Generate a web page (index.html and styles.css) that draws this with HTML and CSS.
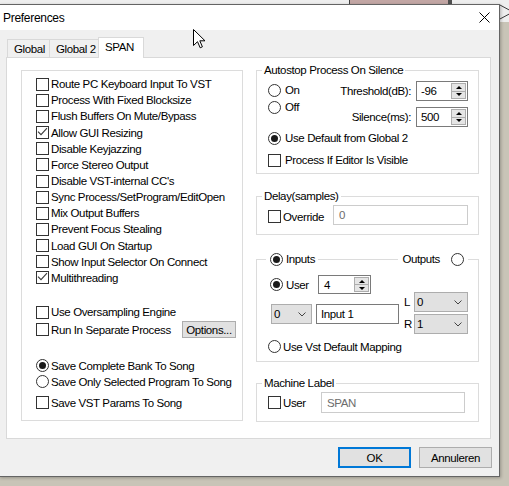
FILE: index.html
```html
<!DOCTYPE html>
<html lang="nl">
<head>
<meta charset="utf-8">
<title>Preferences</title>
<link rel="stylesheet" href="styles.css">
</head>
<body>
<div class="desktop">
  <div class="behind"><div class="pink"></div></div>
  <svg class="behind-tri" width="12" height="24" viewBox="0 0 12 24"><polyline points="0,4.5 14,12 0,19.5" fill="none" stroke="#3a3a3a" stroke-width="1"/></svg>
  <div class="window">
    <div class="titlebar">
      <span class="title">Preferences</span>
      <svg class="close" width="11" height="11" viewBox="0 0 11 11"><path d="M0.5 0.5 L10.5 10.5 M10.5 0.5 L0.5 10.5" stroke="#000" stroke-width="1" fill="none"/></svg>
    </div>
    <div class="wbody">
      <div class="tabs">
        <div class="tab t1">Global</div>
        <div class="tab t2">Global 2</div>
        <div class="tab t3 active">SPAN</div>
      </div>
      <div class="page">
        <div class="lgroup">
          <div class="row"><span class="cb"></span>Route PC Keyboard Input To VST</div>
          <div class="row"><span class="cb"></span>Process With Fixed Blocksize</div>
          <div class="row"><span class="cb"></span>Flush Buffers On Mute/Bypass</div>
          <div class="row"><span class="cb"><svg width="11" height="11" viewBox="0 0 11 11"><polyline points="1,4.6 4,7.6 10,1.2" fill="none" stroke="#3a3a3a" stroke-width="1.1"/></svg></span>Allow GUI Resizing</div>
          <div class="row"><span class="cb"></span>Disable Keyjazzing</div>
          <div class="row"><span class="cb"></span>Force Stereo Output</div>
          <div class="row"><span class="cb"></span>Disable VST-internal CC's</div>
          <div class="row"><span class="cb"></span>Sync Process/SetProgram/EditOpen</div>
          <div class="row"><span class="cb"></span>Mix Output Buffers</div>
          <div class="row"><span class="cb"></span>Prevent Focus Stealing</div>
          <div class="row"><span class="cb"></span>Load GUI On Startup</div>
          <div class="row"><span class="cb"></span>Show Input Selector On Connect</div>
          <div class="row"><span class="cb"><svg width="11" height="11" viewBox="0 0 11 11"><polyline points="1,4.6 4,7.6 10,1.2" fill="none" stroke="#3a3a3a" stroke-width="1.1"/></svg></span>Multithreading</div>
          <div class="row mt-over"><span class="cb"></span>Use Oversampling Engine</div>
          <div class="row run"><span class="cb"></span>Run In Separate Process<div class="opt">Options...</div></div>
          <div class="row mt-save"><span class="rd on"></span>Save Complete Bank To Song</div>
          <div class="row"><span class="rd"></span>Save Only Selected Program To Song</div>
          <div class="row mt-vst"><span class="cb"></span>Save VST Params To Song</div>
        </div>
        <div class="rcol">
          <fieldset class="fs autostop">
            <legend>Autostop Process On Silence</legend>
            <div class="fin">
              <div class="as-top">
                <div class="as-radios">
                  <div class="r17"><span class="rd r4"></span>On</div>
                  <div class="r17"><span class="rd r4"></span>Off</div>
                </div>
                <div class="as-fields">
                  <div class="frow"><span>Threshold(dB):</span><div class="spin"><span class="v">-96</span><span class="sb"><i class="up"></i><i class="dn"></i></span></div></div>
                  <div class="frow f2"><span>Silence(ms):</span><div class="spin"><span class="v">500</span><span class="sb"><i class="up"></i><i class="dn"></i></span></div></div>
                </div>
              </div>
              <div class="row16 mt3"><span class="rd on r4"></span>Use Default from Global 2</div>
              <div class="row16 mt6"><span class="cb r4"></span>Process If Editor Is Visible</div>
            </div>
          </fieldset>
          <fieldset class="fs delay">
            <legend>Delay(samples)</legend>
            <div class="fin drow">
              <div class="row16 ovr"><span class="cb"></span>Override</div>
              <div class="tx dis w135">0</div>
            </div>
          </fieldset>
          <fieldset class="fs inputs">
            <legend class="iolg"><span class="rd on r3"></span><span>Inputs</span><span class="line"></span><span>Outputs</span><span class="rd oright"></span></legend>
            <div class="fin io">
              <div class="io-grid">
                <div class="io-left">
                  <div class="urow"><span class="rd on r3"></span><span class="ulab">User</span><div class="spin w53"><span class="v v5">4</span><span class="sb"><i class="up"></i><i class="dn"></i></span></div></div>
                  <div class="srow">
                    <div class="combo w41"><span>0</span><svg width="8" height="5" viewBox="0 0 8 5"><polyline points="0.5,0.5 4,4 7.5,0.5" fill="none" stroke="#444" stroke-width="1"/></svg></div>
                    <div class="tx w83">Input 1</div>
                  </div>
                </div>
                <div class="io-right">
                  <div class="lr"><span class="lrl">L</span><div class="combo w54"><span>0</span><svg width="8" height="5" viewBox="0 0 8 5"><polyline points="0.5,0.5 4,4 7.5,0.5" fill="none" stroke="#444" stroke-width="1"/></svg></div></div>
                  <div class="lr mt2"><span class="lrl">R</span><div class="combo w54"><span>1</span><svg width="8" height="5" viewBox="0 0 8 5"><polyline points="0.5,0.5 4,4 7.5,0.5" fill="none" stroke="#444" stroke-width="1"/></svg></div></div>
                </div>
              </div>
              <div class="row16 vst"><span class="rd"></span>Use Vst Default Mapping</div>
            </div>
          </fieldset>
          <fieldset class="fs mlabel">
            <legend>Machine Label</legend>
            <div class="fin mrow">
              <div class="row16"><span class="cb"></span>User</div>
              <div class="tx dis w144">SPAN</div>
            </div>
          </fieldset>
        </div>
      </div>
      <div class="btns">
        <div class="btn def">OK</div>
        <div class="btn">Annuleren</div>
      </div>
    </div>
  </div>
  <svg class="cursor" width="13" height="20" viewBox="0 0 13 20"><path d="M0.5 0.5 V16.5 L4.5 12.7 L7.2 18.8 L9.4 17.8 L6.8 11.8 H12 Z" fill="#fff" stroke="#000" stroke-width="1"/></svg>
</div>
</body>
</html>
```

FILE: styles.css
```css
* { box-sizing: border-box; }
html, body { margin: 0; padding: 0; }
body {
  width: 509px; height: 486px; overflow: hidden;
  background: #c8c4b7;
  font-family: "Liberation Sans", Arial, sans-serif;
  font-size: 11.5px; letter-spacing: -0.38px; color: #000;
}
.desktop { position: relative; width: 509px; height: 486px; }
.behind { position: absolute; left: 0; top: 0; width: 509px; height: 22px; background: #eeeeee; }
.pink { position: absolute; left: 349px; top: 0; width: 103px; height: 5px; background: #c2a6a4; border-left: 1px solid #3f3f3f; border-right: 4px solid #505050; }
.behind-tri { position: absolute; left: 499px; top: 0; }
.window {
  position: absolute; left: -1px; top: 4px; width: 501px; height: 473px;
  border: 1px solid #646464; background: #f0f0f0;
  display: flex; flex-direction: column;
  box-shadow: 1px 1px 3px rgba(0,0,0,0.25);
}
.titlebar { flex: none; height: 25px; background: #fff; display: flex; align-items: center; justify-content: space-between; padding: 0 9px 0 3px; }
.title { font-size: 12px; letter-spacing: -0.3px; }
.close { display: block; }
.wbody { flex: 1; display: flex; flex-direction: column; padding: 7px 8px 0 6px; }

.tabs { display: flex; align-items: flex-end; height: 21px; margin: 0 0 -1px 1px; position: relative; z-index: 1; }
.tab { height: 18px; margin-bottom: 1px; border: 1px solid #d9d9d9; border-bottom: none; background: #f0f0f0; padding: 2px 0 0 6px; line-height: 14px; white-space: nowrap; }
.t1 { width: 43px; }
.t2 { width: 49px; border-left: none; }
.t3 { width: 46px; margin-left: -1px; }
.tab.active { height: 21px; margin-bottom: 0; background: #fff; }

.page {
  width: 485px; height: 382px; background: #fff; border: 1px solid #d9d9d9;
  display: grid; grid-template-columns: 222px 223px; column-gap: 13px; align-items: start;
  padding: 6px 11px 0 14px;
}

.lgroup { margin-top: 6px; height: 351px; border: 1px solid #dcdcdc; padding: 5px 6px 0 14px; }
.row { display: flex; align-items: center; height: 16.17px; white-space: nowrap; }
.row16 { display: flex; align-items: center; height: 16px; white-space: nowrap; }
.cb { flex: none; width: 13px; height: 13px; border: 1px solid #333; background: #fff; margin-right: 2px; display: flex; }
.cb svg { display: block; }
.rd { flex: none; width: 13px; height: 13px; border: 1px solid #333; border-radius: 50%; background: #fff; margin-right: 2px; display: flex; align-items: center; justify-content: center; }
.rd.on::after { content: ""; width: 7px; height: 7px; border-radius: 50%; background: #1a1a1a; }
.r4 { margin-right: 4px; }
.r3 { margin-right: 3px; }
.mt-over { margin-top: 18.2px; }
.run { height: 17px; margin-top: 1px; }
.opt { margin-left: auto; width: 54px; height: 17px; background: #e1e1e1; border: 1px solid #adadad; display: flex; align-items: center; justify-content: center; }
.mt-save { margin-top: 19.3px; }
.mt-vst { margin-top: 4.7px; }

.rcol { display: flex; flex-direction: column; }
.fs { margin: 0; padding: 0; border: 1px solid #dcdcdc; min-width: 0; }
.fs > legend { margin-left: 5px; padding: 0 2px; height: 13px; line-height: 13px; white-space: nowrap; }
.autostop { height: 110px; }
.delay { height: 45px; margin-top: 16px; }
.inputs { height: 109px; margin-top: 18px; }
.mlabel { height: 45px; margin-top: 15px; }
.fin { padding: 0 10px 0 11px; }

.as-top { display: flex; justify-content: space-between; }
.as-radios { padding-top: 4.5px; }
.r17 { display: flex; align-items: center; height: 17px; }
.frow { display: flex; align-items: center; justify-content: flex-end; gap: 5px; height: 20px; margin-top: 4px; }
.frow.f2 { margin-top: 6px; }
.mt3 { margin-top: 3px; }
.mt6 { margin-top: 6px; }
.mt2 { margin-top: 2px; }

.spin { display: flex; align-items: stretch; width: 52px; height: 20px; border: 1px solid #7a7a7a; background: #fff; }
.spin .v { flex: 1; display: flex; align-items: center; padding-left: 4px; }
.spin .v5 { padding-left: 5px; }
.sb { flex: none; width: 15px; margin: 1px; display: flex; flex-direction: column; border: 1px solid #adadad; background: #e5e5e5; }
.sb i { flex: 1; display: flex; align-items: center; justify-content: center; }
.sb i + i { border-top: 1px solid #adadad; }
.sb .up::before { content: ""; border-left: 3px solid transparent; border-right: 3px solid transparent; border-bottom: 3px solid #000; }
.sb .dn::before { content: ""; border-left: 3px solid transparent; border-right: 3px solid transparent; border-top: 3px solid #000; }
.w53 { width: 53px; height: 19px; }

.tx { display: flex; align-items: center; height: 20px; border: 1px solid #7a7a7a; background: #fff; padding-left: 4px; white-space: nowrap; }
.tx.dis { border-color: #cccccc; color: #6d6d6d; padding-left: 5px; }
.w135 { width: 135px; }
.w83 { width: 83px; }
.w144 { width: 144px; height: 21px; margin-right: 3px; }

.drow { display: flex; align-items: flex-start; justify-content: space-between; padding-top: 2px; }
.ovr { margin-top: 3.5px; }

.iolg { margin-left: 9px !important; width: 202px; display: flex; align-items: center; padding: 0 4px !important; }
.line { flex: 1; height: 1px; background: #dcdcdc; margin: 0 4px 0 3px; }
.oright { margin-left: 11px; margin-right: 0; }
.io { padding-left: 13px; }
.io-grid { display: flex; justify-content: space-between; }
.urow { display: flex; align-items: center; height: 19px; margin-top: 9px; }
.ulab { width: 32px; }
.srow { display: flex; gap: 4px; margin-top: 10px; margin-left: 1px; height: 20px; }
.combo { display: flex; align-items: center; justify-content: space-between; height: 20px; background: #e1e1e1; border: 1px solid #adadad; padding: 0 5px 0 2px; }
.combo svg { display: block; }
.w41 { width: 41px; }
.w54 { width: 54px; }
.io-right { margin-top: 26px; }
.lr { display: flex; align-items: center; height: 20px; }
.lrl { width: 8px; margin-right: 2px; }
.vst { margin-top: 4.7px; margin-left: -2px; }

.mrow { display: flex; align-items: center; justify-content: space-between; height: 21px; margin-top: 2px; }

.btns { display: flex; justify-content: flex-end; gap: 8px; margin-top: 8px; margin-right: -1px; }
.btn { width: 73px; height: 21px; display: flex; align-items: center; justify-content: center; background: #e1e1e1; border: 1px solid #adadad; }
.btn.def { border: 2px solid #0078d7; }

.cursor { position: absolute; left: 193px; top: 29px; }
```
